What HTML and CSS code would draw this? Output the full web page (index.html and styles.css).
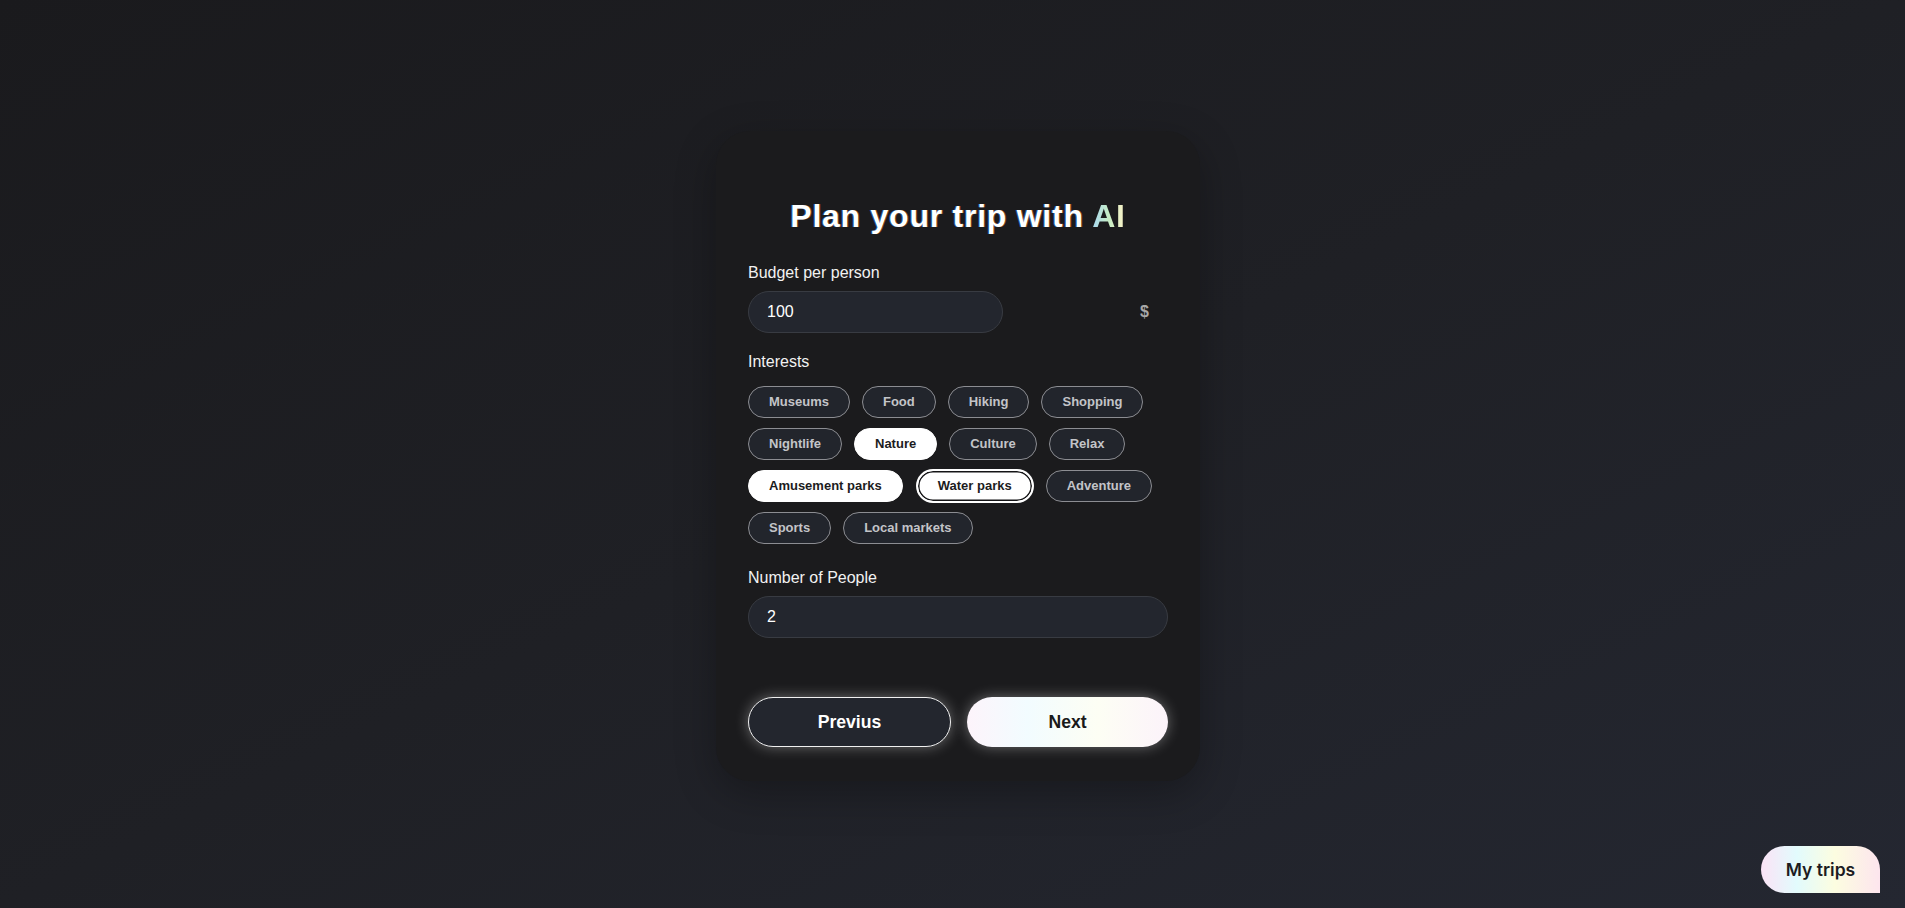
FILE: index.html
```html
<!DOCTYPE html>
<html lang="en">
<head>
<meta charset="utf-8">
<title>Plan your trip with AI</title>
<link rel="stylesheet" href="styles.css">
</head>
<body>
<main class="page">
  <section class="card">
    <h1 class="title">Plan your trip with <span class="ai">AI</span></h1>

    <div class="field">
      <label class="label" for="budget">Budget per person</label>
      <div class="budget-row">
        <input id="budget" class="input input-budget" type="text" value="100">
        <span class="currency">$</span>
      </div>
    </div>

    <div class="field">
      <div class="label">Interests</div>
      <div class="chips">
        <button class="chip">Museums</button>
        <button class="chip">Food</button>
        <button class="chip">Hiking</button>
        <button class="chip">Shopping</button>
        <button class="chip">Nightlife</button>
        <button class="chip chip-on">Nature</button>
        <button class="chip">Culture</button>
        <button class="chip">Relax</button>
        <button class="chip chip-on">Amusement parks</button>
        <button class="chip chip-on chip-focus">Water parks</button>
        <button class="chip">Adventure</button>
        <button class="chip">Sports</button>
        <button class="chip">Local markets</button>
      </div>
    </div>

    <div class="field field-people">
      <label class="label" for="people">Number of People</label>
      <input id="people" class="input" type="text" value="2">
    </div>

    <div class="actions">
      <button class="btn btn-prev">Previus</button>
      <button class="btn btn-next">Next</button>
    </div>
  </section>
</main>
<button class="my-trips">My trips</button>
</body>
</html>
```

FILE: styles.css
```css
* { box-sizing: border-box; }

html, body {
  margin: 0;
  height: 100%;
}

body {
  font-family: "Liberation Sans", Arial, sans-serif;
  color: #fff;
  background: linear-gradient(to bottom right, #1a1a1d 0%, #1f2025 50%, #242731 100%);
  overflow: hidden;
}

.page {
  min-height: 100vh;
  display: flex;
  align-items: center;
  justify-content: center;
  padding: 4px 0 0 11px;
}

.card {
  width: 484px;
  background: #1b1b1d;
  border-radius: 34px;
  padding: 32px 32px 34px;
  box-shadow: 0 12px 40px rgba(0, 0, 0, 0.28);
}

.title {
  margin: 35px 0 29px;
  font-size: 32px;
  line-height: 37px;
  font-weight: 700;
  letter-spacing: 0.75px;
  text-align: center;
  color: #fff;
  text-shadow: -1px 0 rgba(40, 140, 255, 0.55), 1px 0 rgba(255, 130, 30, 0.45);
}

.ai {
  background: linear-gradient(90deg, #a9d8f2 0%, #c6ecc4 50%, #fff3c8 100%);
  -webkit-background-clip: text;
  background-clip: text;
  color: transparent;
  text-shadow: none;
}

.field { margin-bottom: 20px; }
.field-people { margin-top: 25px; margin-bottom: 59px; }

.label {
  display: block;
  font-size: 16px;
  line-height: 18px;
  color: #f2f2f2;
  margin-bottom: 9px;
}

.budget-row {
  display: flex;
  align-items: center;
}

.input {
  display: block;
  width: 100%;
  height: 42px;
  border-radius: 21px;
  border: 1px solid #383b42;
  background: #23262e;
  color: #fff;
  font-family: "Liberation Sans", Arial, sans-serif;
  font-size: 16px;
  padding: 0 18px;
  outline: none;
}

.input-budget { width: 255px; }

.currency {
  margin-left: auto;
  margin-right: 19px;
  font-size: 16px;
  font-weight: 700;
  color: #a8a8a8;
}

.chips {
  display: flex;
  flex-wrap: wrap;
  gap: 10px 12px;
  margin-top: 15px;
}

.chip {
  height: 32px;
  padding: 0 20px;
  border-radius: 16px;
  border: 1px solid #8c8d92;
  background: #22252c;
  color: #c3c4c8;
  font-family: "Liberation Sans", Arial, sans-serif;
  font-size: 13px;
  font-weight: 700;
  line-height: 30px;
}

.chip-on {
  background: #fff;
  border-color: #fff;
  color: #1c1c1e;
}

.chip-focus {
  margin: 0 1px 0 2px;
  box-shadow: inset 0 0 0 1.5px #141416, 0 0 0 1px #fff;
}

.actions {
  display: flex;
  gap: 16px;
}

.btn {
  flex: 1;
  height: 50px;
  border-radius: 25px;
  font-family: "Liberation Sans", Arial, sans-serif;
  font-size: 17.6px;
  font-weight: 700;
  box-shadow: 0 0 14px rgba(255, 255, 255, 0.35);
}

.btn-prev {
  background: #23262e;
  border: 1px solid #f0f0f0;
  color: #fff;
}

.btn-next {
  border: none;
  color: #1a1a1a;
  background: linear-gradient(90deg, #fdf4fb 0%, #f2fcff 30%, #fdfef4 65%, #fcf3fa 100%);
}

.my-trips {
  position: fixed;
  right: 25px;
  bottom: 15px;
  width: 119px;
  height: 47px;
  border: none;
  border-radius: 24px 24px 0 24px;
  background: linear-gradient(90deg, #fbe3f6 0%, #e2fbfd 30%, #fcfde0 62%, #fde5ee 100%);
  color: #1c1c22;
  font-family: Inter, "Liberation Sans", sans-serif;
  font-size: 17.5px;
  font-weight: 600;
}
```
